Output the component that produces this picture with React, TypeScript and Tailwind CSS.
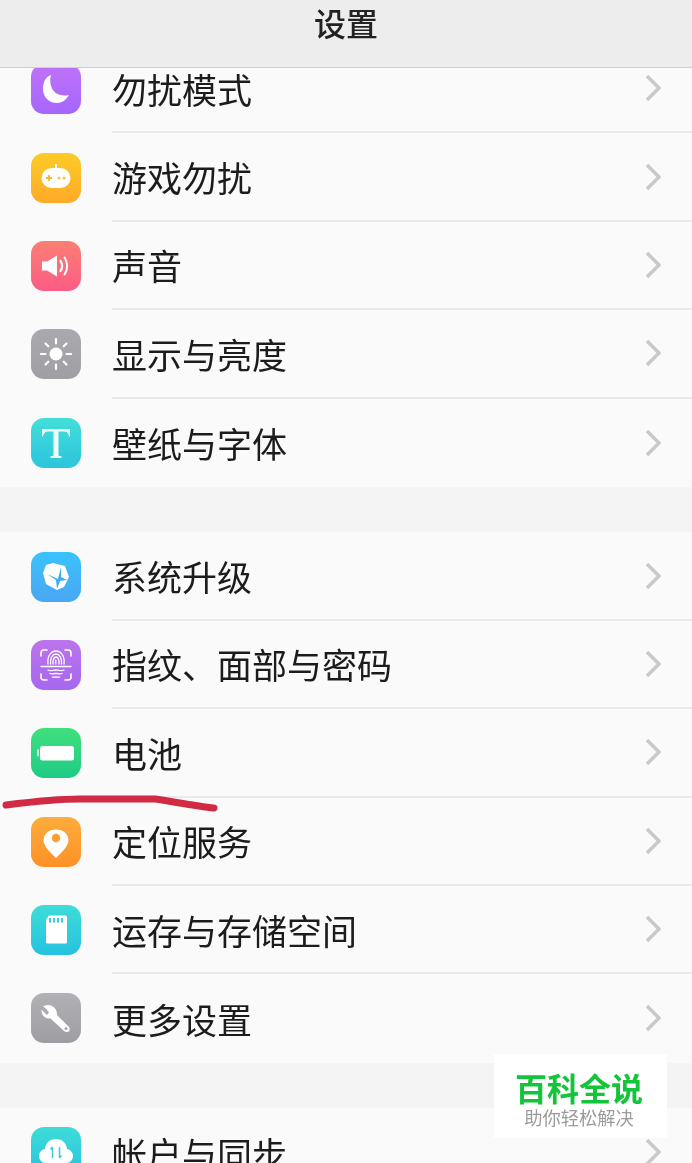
import type { ReactNode } from 'react';

const FONT = "font-['Noto_Sans_CJK_SC','Noto_Sans',sans-serif]";

function Glyph({ children }: { children: ReactNode }) {
  return (
    <svg viewBox="0 0 50 50" className="h-[50px] w-[50px]">
      {children}
    </svg>
  );
}

const MoonIcon = (
  <Glyph>
    <path d="M20 11C14 13 12 19 12 25 12 33 18 39 26 39 31 39 35 36 38 31 29 33 22 29 20 22 19 18 19 14 20 11Z" fill="#fff" />
  </Glyph>
);

const GameIcon = (
  <Glyph>
    <rect x="24" y="11" width="2" height="5" fill="#fff" />
    <rect x="10.500" y="15" width="29" height="20" rx="10" fill="#fff" />
    <path d="M15 25h6M18 22v6" stroke="#fdb62a" strokeWidth="1.800" />
    <circle cx="28" cy="25" r="1.500" fill="#fdc04a" />
    <circle cx="33" cy="25" r="1.500" fill="#fdc04a" />
  </Glyph>
);

const SoundIcon = (
  <Glyph>
    <path d="M11 20.500h5l10-6v21l-10-6h-5z" fill="#fff" />
    <path d="M29.500 20c2 3 2 7 0 10" stroke="#fff" strokeWidth="2.200" fill="none" strokeLinecap="round" />
    <path d="M33.500 16.500c3.500 5 3.500 12 0 17" stroke="#fff" strokeWidth="2" fill="none" strokeLinecap="round" />
  </Glyph>
);

const SunIcon = (
  <Glyph>
    <circle cx="25" cy="25" r="6.500" fill="#fff" />
    <g stroke="#fff" strokeWidth="2.200" strokeLinecap="round">
      <path d="M25 10v4.500M25 35.500v4.500M10 25h4.500M35.500 25H40M14.500 14.500l2.800 2.800M32.700 32.700l2.800 2.800M35.500 14.500l-2.800 2.800M17.300 32.700l-2.800 2.800" />
    </g>
  </Glyph>
);

const FontIcon = (
  <Glyph>
    <path
      d="M11 11h28v7.500h-1c-.6-3-1.800-5-4.500-5h-6v23.500c0 .8 1 1.200 3 1.200V40h-11v-1.800c2 0 3-.4 3-1.200V13.500h-6c-2.700 0-3.900 2-4.500 5h-1z"
      fill="#fff"
      fillOpacity="0.920"
    />
  </Glyph>
);

const UpgradeIcon = (
  <Glyph>
    <path d="M22 11l12 3 4 11-5 10-7 3-11-6-3-11 3-8z" fill="#fff" />
    <path d="M30 15l-3 12-11-5 9 6 1 9 3-8 7-1-6-3z" fill="#39afee" />
  </Glyph>
);

const FingerprintIcon = (
  <Glyph>
    <g stroke="#fff" strokeWidth="1.300" fill="none" strokeLinecap="round">
      <path d="M10 16v-3a3 3 0 0 1 3-3h3M34 10h3a3 3 0 0 1 3 3v3M10 34v3a3 3 0 0 0 3 3h3M34 40h3a3 3 0 0 0 3-3v-3" strokeWidth="1.600" />
      <path d="M10 26.500h30" />
      <path d="M17 24c-1-8 3-13 8-13s9 5 8 13" />
      <path d="M19.500 24c-.5-6 2-10 5.500-10s6 4 5.500 10" />
      <path d="M22 24c-.3-4 .8-7 3-7s3.300 3 3 7" />
      <path d="M24.800 24v-4" />
      <path d="M17 30c3 1.500 5 0 8 0s5 1.500 8 0M19 33.500c2 1 4 0 6 0s4 1 6 0M21.500 37c1.500.5 2.500 0 3.500 0s2 .5 3.500 0" />
    </g>
  </Glyph>
);

const BatteryIcon = (
  <Glyph>
    <rect x="6" y="21" width="2" height="7.500" rx="1" fill="#fff" fillOpacity="0.700" />
    <rect x="9" y="18" width="34" height="14.500" rx="2.500" fill="#fff" />
  </Glyph>
);

const LocationIcon = (
  <Glyph>
    <path d="M25 12.500c-7 0-12.500 4.500-12.500 11C12.500 29 20 36 25 41c5-5 12.500-12 12.500-17.500C37.500 17 32 12.500 25 12.500z" fill="#fff" />
    <circle cx="25" cy="21" r="4.200" fill="#fd9f2f" />
  </Glyph>
);

const StorageIcon = (
  <Glyph>
    <path d="M17 12a1.500 1.500 0 0 1 1.500-1.500h16A1.500 1.500 0 0 1 36 12v25a1.500 1.500 0 0 1-1.500 1.500h-18A1.500 1.500 0 0 1 15 37V15z" fill="#fff" />
    <g fill="#35cfdd">
      <rect x="18" y="13" width="2" height="4.500" />
      <rect x="22" y="13" width="2" height="4.500" />
      <rect x="26" y="13" width="2" height="4.500" />
      <rect x="30" y="13" width="2" height="4.500" />
    </g>
  </Glyph>
);

const WrenchIcon = (
  <Glyph>
    <path d="M17 12l-5 1 6 6-2 3-5.500-5.500C10 21 13 26 19.500 25.500L33 38c2 1.500 5 1.500 5.500-1 .5-2-.5-3-1.500-4L26 22c.5-5-3.500-10-9-10z" fill="#fff" />
    <circle cx="35" cy="35.500" r="1.500" fill="#a3a3a8" />
  </Glyph>
);

const CloudIcon = (
  <Glyph>
    <path d="M15 36c-4.500 0-7-3.500-7-7s2.500-6.500 6-7c.5-6 5-10 11-10s10.500 4 11 10c3.500.5 6 3.500 6 7s-2.500 7-7 7z" fill="#fff" />
    <path d="M21.500 20v11M19.500 22.500l2-2.500M28.500 31V20M28.500 31l2-2.500" stroke="#35cfdd" strokeWidth="1.500" fill="none" />
  </Glyph>
);

interface Item {
  label: string;
  gradient: string;
  icon: ReactNode;
}

const sections: Item[][] = [
  [
    { label: '勿扰模式', gradient: 'from-[#c072f8] to-[#a566fb]', icon: MoonIcon },
    { label: '游戏勿扰', gradient: 'from-[#fdcb27] to-[#fdaa28]', icon: GameIcon },
    { label: '声音', gradient: 'from-[#fb7f74] to-[#fb5b84]', icon: SoundIcon },
    { label: '显示与亮度', gradient: 'from-[#a9a9ae] to-[#9f9fa4]', icon: SunIcon },
    { label: '壁纸与字体', gradient: 'from-[#42dfd9] to-[#2cc4dd]', icon: FontIcon },
  ],
  [
    { label: '系统升级', gradient: 'from-[#38c3fb] to-[#4aa6f3]', icon: UpgradeIcon },
    { label: '指纹、面部与密码', gradient: 'from-[#bb74ec] to-[#a667ef]', icon: FingerprintIcon },
    { label: '电池', gradient: 'from-[#3fe07d] to-[#1ccb85]', icon: BatteryIcon },
    { label: '定位服务', gradient: 'from-[#fdac3b] to-[#fd9127]', icon: LocationIcon },
    { label: '运存与存储空间', gradient: 'from-[#3fdcd8] to-[#25c2e0]', icon: StorageIcon },
    { label: '更多设置', gradient: 'from-[#b1b1b5] to-[#9d9da3]', icon: WrenchIcon },
  ],
  [{ label: '帐户与同步', gradient: 'from-[#3fdcd8] to-[#25c2e0]', icon: CloudIcon }],
];

function Row({ item, last }: { item: Item; last: boolean }) {
  return (
    <div className="flex h-[88.4px] items-center bg-[#fafafa]">
      <div className="flex w-[112px] shrink-0 justify-start pl-[31px]">
        <div className={`h-[50px] w-[50px] rounded-[13px] bg-linear-to-b ${item.gradient}`}>{item.icon}</div>
      </div>
      <div
        className={`flex h-full flex-1 items-center justify-between pr-[31px] ${last ? '' : 'border-b-2 border-[#e9e9e9]'}`}
      >
        <span className="text-[35px] leading-none text-[#1c1c1c]">{item.label}</span>
        <svg viewBox="0 0 16 28" className="h-[28px] w-[16px]" fill="none">
          <path d="M2 2l12 12L2 26" stroke="#c9c9c9" strokeWidth="3.500" />
        </svg>
      </div>
    </div>
  );
}

export default function App() {
  return (
    <div className={`relative flex h-[1163px] w-[692px] flex-col overflow-hidden bg-[#f4f4f4] blur-[0.4px] ${FONT}`}>
      <header className="z-10 flex h-[68px] shrink-0 justify-center border-b border-[#cfcfcf] bg-[#ededed] pt-[3px]">
        <h1 className="text-[32px] leading-[38px] font-medium text-[#222]">设置</h1>
      </header>

      <div className="-mt-[23px] flex flex-col gap-[45.4px]">
        {sections.map((items) => (
          <div key={items[0].label}>
            {items.map((item, i) => (
              <Row key={item.label} item={item} last={i === items.length - 1} />
            ))}
          </div>
        ))}
      </div>

      {/* pen mark under the battery row */}
      <svg viewBox="0 0 692 1163" className="pointer-events-none absolute inset-0 h-[1163px] w-[692px]" fill="none">
        <path
          d="M6 805C30 802 55 799 80 799L155 799C170 801 195 806 214 808"
          stroke="#d02a45"
          strokeWidth="7"
          strokeLinecap="round"
        />
      </svg>

      <div className="absolute top-[1054px] left-[494px] flex h-[84px] w-[173px] flex-col items-center bg-white pt-[15px] pr-[3px]">
        <span className="text-[32px] leading-[36px] font-bold text-[#14c43a]">百科全说</span>
        <span className="mt-[1px] text-[18.300px] leading-[22px] text-[#9b9b9b]">助你轻松解决</span>
      </div>
    </div>
  );
}
